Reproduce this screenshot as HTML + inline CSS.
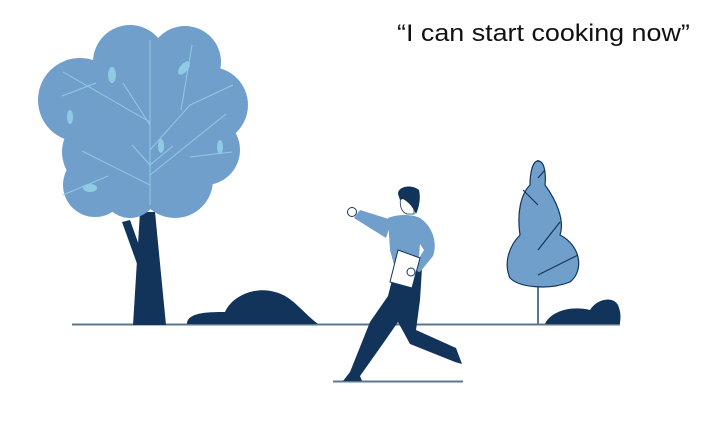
<!DOCTYPE html>
<html><head><meta charset="utf-8"><style>
html,body{margin:0;padding:0;background:#fff;width:705px;height:444px;overflow:hidden}
.t{position:absolute;left:397px;top:20px;font-family:"Liberation Sans",sans-serif;font-size:24px;color:#111;white-space:nowrap;transform-origin:0 0;transform:scaleX(1.12)}
</style></head><body>
<div class="t">“I can start cooking now”</div>
<svg width="705" height="444" viewBox="0 0 705 444" style="position:absolute;left:0;top:0">
<line x1="72" y1="324.5" x2="620" y2="324.5" stroke="#5d7690" stroke-width="2"/>
<line x1="333" y1="381.5" x2="463" y2="381.5" stroke="#5d7690" stroke-width="2"/>
<path d="M122 222 L130 220 L145 262 L140 272 Z" fill="#13345a"/>
<path d="M140 212 L155 212 L166 325 L133 325 Z" fill="#13345a"/>
<g fill="#719fcc">
<circle cx="130" cy="62" r="37"/><circle cx="185" cy="62" r="36"/>
<circle cx="80" cy="100" r="42"/><circle cx="210" cy="105" r="38"/>
<circle cx="100" cy="152" r="38"/><circle cx="205" cy="150" r="35"/>
<circle cx="95" cy="185" r="32"/><circle cx="175" cy="180" r="38"/>
<circle cx="140" cy="125" r="60"/><circle cx="130" cy="190" r="28"/>
</g>
<g stroke="#8fcbe3" stroke-width="1" fill="none">
<path d="M150 40 V205 M150 150 L190 105 L233 85 M181 110 L192 45 M150 122 L63 72 M62 96 L96 83 M150 185 L82 151 M150 125 L123 83 M150 165 L173 146 M150 175 L226 114 M190 157 L232 152 M63 195 L108 176 M150 165 L132 145"/>
</g>
<g fill="#8fcbe3"><ellipse cx="112" cy="75" rx="4" ry="8"/><ellipse cx="184" cy="68" rx="4" ry="8" transform="rotate(40 184 68)"/><ellipse cx="70" cy="117" rx="3" ry="7"/><ellipse cx="161" cy="146" rx="3" ry="7"/><ellipse cx="220" cy="147" rx="3" ry="7"/><ellipse cx="90" cy="188" rx="7" ry="4"/></g>
<path d="M187 324 C187 312 210 312 225 312 C232 296 255 286 275 292 C292 296 300 310 318 324 Z" fill="#13345a"/>
<path d="M545 324 C550 312 570 305 590 310 C596 300 612 295 618 305 C622 315 620 320 620 324 Z" fill="#13345a"/>
<line x1="538" y1="160" x2="538" y2="324" stroke="#5d7690" stroke-width="2"/>
<path d="M538 161 C545 161 546 175 545 185 C556 200 565 220 560 235 C580 245 585 270 570 282 C550 290 520 288 510 278 C503 262 510 245 520 235 C517 215 520 195 530 185 C530 175 532 161 538 161 Z" fill="#719fcc" stroke="#13345a" stroke-width="1.2"/>
<path d="M538 178 L545 170 M538 205 L523 190 M538 250 L560 222 M538 275 L578 255" stroke="#13345a" stroke-width="1.2" fill="none"/>
<!-- person legs -->
<path d="M395 268 L422 268 L420 300 L416 330 L456 348 L462 364 L455 362 L410 344 L398 322 L382 345 L360 376 L362 381 L343 381 L350 372 L370 322 L388 296 Z" fill="#13345a"/>
<!-- arm -->
<path d="M392 220 L360 210 L354 218 L386 238 Z" fill="#719fcc"/>
<!-- torso -->
<path d="M388 218 C398 214 412 214 420 218 C432 226 438 242 433 256 L420 272 L412 270 L424 250 L420 244 L418 270 L396 272 L390 250 Z" fill="#719fcc"/>
<path d="M398 250 L420 258 L412 288 L390 282 Z" fill="#fff" stroke="#13345a" stroke-width="1"/>
<circle cx="352" cy="212" r="4.5" fill="#fff" stroke="#13345a" stroke-width="1"/>
<circle cx="411" cy="272" r="4" fill="#fff" stroke="#13345a" stroke-width="1"/>
<path d="M401 196 C399 205 401 212 407 214 L414 214 L414 204 Z" fill="#fff" stroke="#13345a" stroke-width="0.8"/>
<path d="M398 194 C398 186 412 184 419 190 C421 198 419 208 416 214 C413 208 410 203 403 199 L400 200 Z" fill="#13345a"/>
</svg>
</body></html>
